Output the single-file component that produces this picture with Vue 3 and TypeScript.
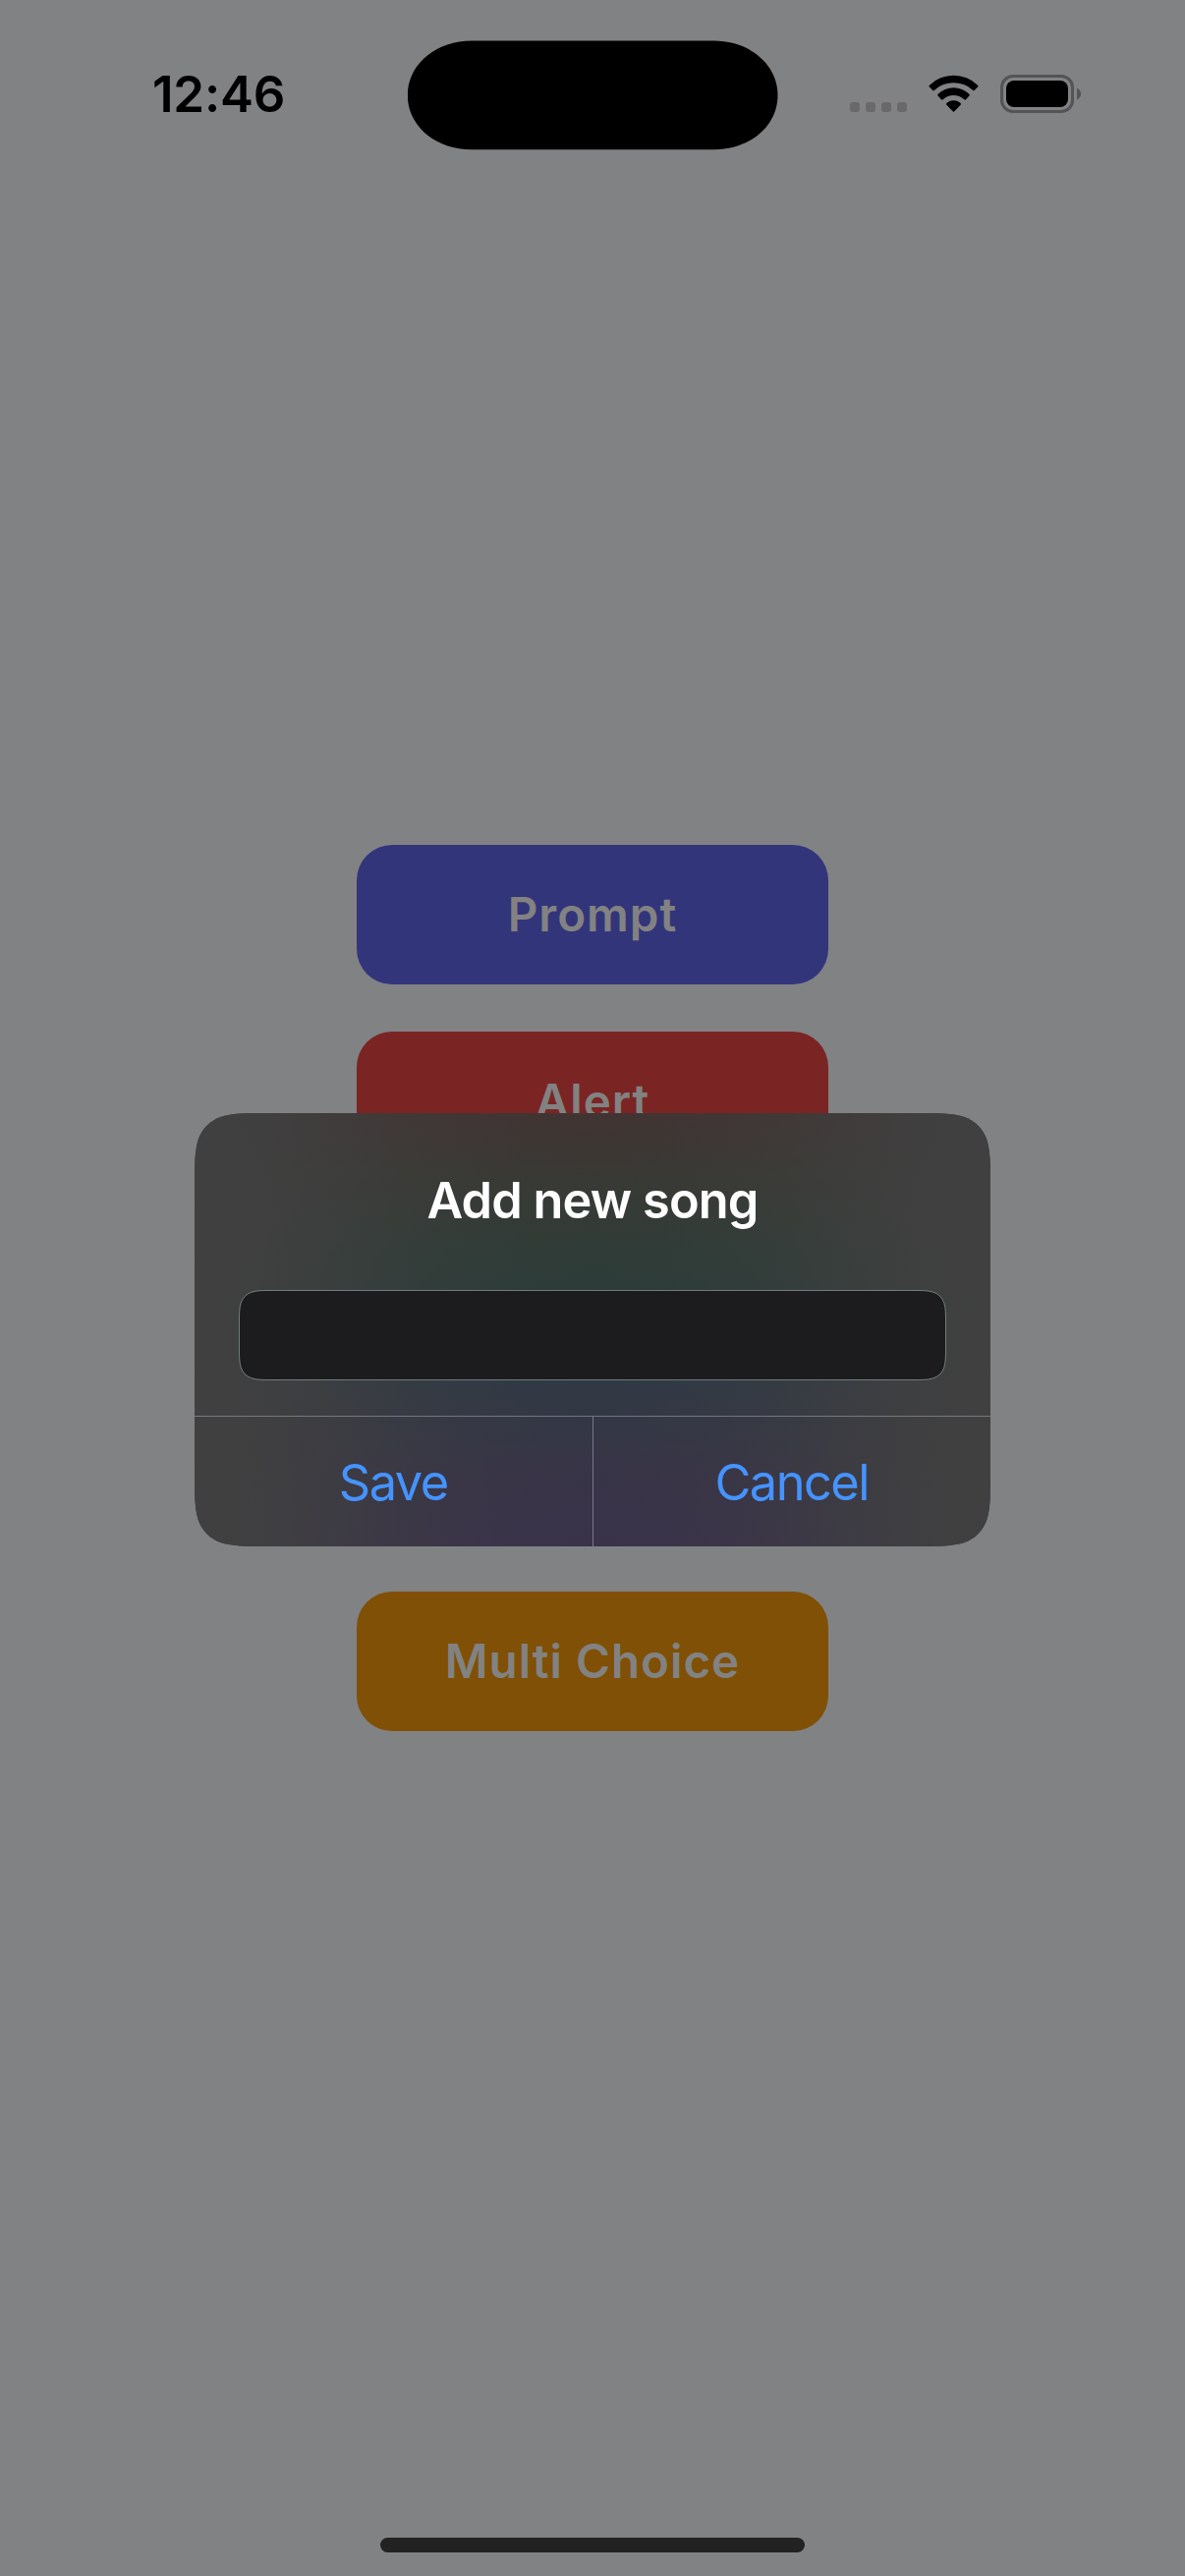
<script setup lang="ts">
interface ActionButton {
  label: string
  color: string
}

const actions: ActionButton[] = [
  { label: 'Prompt', color: '#33357b' },
  { label: 'Alert', color: '#7b2424' },
  { label: '', color: '#0b5c42' },
  { label: '', color: '#46307b' },
  { label: 'Multi Choice', color: '#7f5005' },
]

// Rounded rectangle with continuous (smoothed) corners, offset by `o`.
function smoothRect(w: number, h: number, r: number, o = 0): string {
  const a = 1.528665 * r
  const b = 1.3 * r
  const c = 0.9 * r
  const d = 0.631494 * r
  const e = 0.085 * r
  const f = 0.372824 * r
  const g = 0.16906 * r
  const p = (x: number, y: number) => `${(x + o).toFixed(2)} ${(y + o).toFixed(2)}`
  return [
    `M${p(a, 0)}`,
    `L${p(w - a, 0)}`,
    `C${p(w - b, 0)} ${p(w - c, 0)} ${p(w - d, e)}`,
    `C${p(w - f, g)} ${p(w - g, f)} ${p(w - e, d)}`,
    `C${p(w, c)} ${p(w, b)} ${p(w, a)}`,
    `L${p(w, h - a)}`,
    `C${p(w, h - b)} ${p(w, h - c)} ${p(w - e, h - d)}`,
    `C${p(w - g, h - f)} ${p(w - f, h - g)} ${p(w - d, h - e)}`,
    `C${p(w - c, h)} ${p(w - b, h)} ${p(w - a, h)}`,
    `L${p(a, h)}`,
    `C${p(b, h)} ${p(c, h)} ${p(d, h - e)}`,
    `C${p(f, h - g)} ${p(g, h - f)} ${p(e, h - d)}`,
    `C${p(0, h - c)} ${p(0, h - b)} ${p(0, h - a)}`,
    `L${p(0, a)}`,
    `C${p(0, b)} ${p(0, c)} ${p(e, d)}`,
    `C${p(g, f)} ${p(f, g)} ${p(d, e)}`,
    `C${p(c, 0)} ${p(b, 0)} ${p(a, 0)}`,
    'Z',
  ].join(' ')
}

const dialogClip = `path("${smoothRect(810, 441, 43)}")`
const fieldPath = smoothRect(719, 91, 20, 0.5)
</script>

<template>
  <div class="screen">
    <header class="status">
      <div class="time">12:46</div>
      <svg class="island" width="377" height="112" viewBox="0 0 377 112">
        <path d="M65 0.6H311.500C348.500 0.600 376.500 25 376.500 56S348.500 111.300 311.500 111.300H65C28 111.300 -0.200 87 -0.200 56S28 0.600 65 0.600Z" />
      </svg>
      <svg class="indicators" width="236" height="40" viewBox="865 76 236 40">
        <g fill="#69696b">
          <rect x="865" y="104" width="10" height="10" rx="3" />
          <rect x="881" y="104" width="10" height="10" rx="3" />
          <rect x="897" y="104" width="10" height="10" rx="3" />
          <rect x="913" y="104" width="10" height="10" rx="3" />
        </g>
        <g transform="translate(780 20) scale(0.33333)">
          <path d="M497 205Q495 203 498 200A106 106 0 0 1 645 200Q648 203 646 205L635 216Q633 218 630 215A87 87 0 0 0 513 215Q510 218 508 216Z" />
          <path d="M523 232Q521 230 524 227A68 68 0 0 1 619 227Q622 230 620 232L609 244Q606 247 603 243A48 48 0 0 0 540 243Q537 247 534 244Z" />
          <path d="M550 260Q547 257 551 254A32 32 0 0 1 592 254Q596 257 593 260L574 280Q571.500 283 569 280Z" />
        </g>
        <rect x="1019.500" y="77.500" width="72" height="36" rx="11.500" fill="none" stroke="#545456" stroke-width="3" />
        <rect x="1024" y="82" width="63" height="27" rx="8" />
        <path d="M1096 89.500Q1100 91.500 1100 95.500T1096 101.500Z" fill="#545456" />
      </svg>
    </header>

    <main class="actions">
      <button
        v-for="(action, i) in actions"
        :key="i"
        class="action"
        :style="{ backgroundColor: action.color }"
      >{{ action.label }}</button>
    </main>

    <section class="dialog" :style="{ clipPath: dialogClip }">
      <div class="dialog-body">
        <h1 class="title">Add new song</h1>
        <svg class="field" width="720" height="92" viewBox="0 0 720 92">
          <path :d="fieldPath" fill="#1c1c1e" stroke="#d2ebe6" stroke-opacity="0.42" />
        </svg>
      </div>
      <div class="dialog-actions">
        <button class="choice save">Save</button>
        <button class="choice cancel">Cancel</button>
      </div>
    </section>

    <div class="home"></div>
  </div>
</template>

<style>
body {
  margin: 0;
  background: #818284;
}
</style>

<style scoped>
.screen {
  position: relative;
  box-sizing: border-box;
  width: 1206px;
  height: 2622px;
  overflow: hidden;
  display: flex;
  flex-direction: column;
  background: #818284;
  font-family: Inter, "Liberation Sans", sans-serif;
}
.status {
  flex: none;
  height: 177px;
  box-sizing: border-box;
  padding-top: 41px;
  display: flex;
  align-items: flex-start;
}
.time {
  width: 260px;
  margin-left: 155px;
  height: 110px;
  line-height: 110px;
  font-size: 51px;
  font-weight: 600;
  letter-spacing: -0.2px;
  white-space: nowrap;
}
.island {
  flex: none;
}
.indicators {
  flex: none;
  margin: 35px 0 0 73px;
}
.actions {
  flex: 1;
  display: flex;
  flex-direction: column;
  align-items: center;
  justify-content: center;
  gap: 48px;
  /* Balances the status bar so the stack sits in the middle of the screen. */
  margin-bottom: 138px;
}
.action {
  width: 480px;
  height: 142px;
  border: 0;
  padding: 0 0 1px;
  border-radius: 36px;
  color: #828282;
  font: inherit;
  font-size: 47.5px;
  font-weight: 600;
  letter-spacing: 1px;
}
.dialog {
  position: absolute;
  left: 198px;
  top: 1133px;
  width: 810px;
  height: 441px;
  display: flex;
  flex-direction: column;
  background:
    linear-gradient(
      90deg,
      #404040 0%,
      rgba(64, 64, 64, 0.9) 9%,
      rgba(64, 64, 64, 0.63) 18%,
      rgba(64, 64, 64, 0.34) 26%,
      rgba(64, 64, 64, 0.15) 34%,
      rgba(64, 64, 64, 0.04) 42%,
      rgba(64, 64, 64, 0) 50%,
      rgba(64, 64, 64, 0.04) 58%,
      rgba(64, 64, 64, 0.15) 66%,
      rgba(64, 64, 64, 0.34) 74%,
      rgba(64, 64, 64, 0.63) 82%,
      rgba(64, 64, 64, 0.9) 91%,
      #404040 100%
    ),
    linear-gradient(
      180deg,
      #413433 0%,
      #3d3633 7%,
      #393934 14%,
      #343b36 24%,
      #2f3c37 32%,
      #2d3c39 40%,
      #2d3b3e 50%,
      #303944 62%,
      #343745 72%,
      #383447 84%,
      #39334a 100%
    );
}
.dialog-body {
  height: 308px;
  box-sizing: border-box;
  padding-top: 59px;
  display: flex;
  flex-direction: column;
  align-items: center;
}
.title {
  margin: 0 0 61px;
  height: 60px;
  line-height: 60px;
  color: #fff;
  font-size: 50.5px;
  font-weight: 600;
  letter-spacing: -0.9px;
}
.field {
  display: block;
  flex: none;
}
.dialog-actions {
  flex: 1;
  display: flex;
  border-top: 1px solid rgba(220, 225, 245, 0.36);
}
.choice {
  flex: 1;
  border: 0;
  padding: 0;
  background: none;
  color: #4593ff;
  font: inherit;
  font-size: 50.5px;
  font-weight: 400;
  letter-spacing: -1.5px;
}
.choice + .choice {
  border-left: 1px solid rgba(220, 215, 245, 0.4);
}
.home {
  flex: none;
  align-self: center;
  width: 432px;
  height: 15px;
  margin-bottom: 24px;
  border-radius: 7.5px;
  background: #222;
}
</style>
